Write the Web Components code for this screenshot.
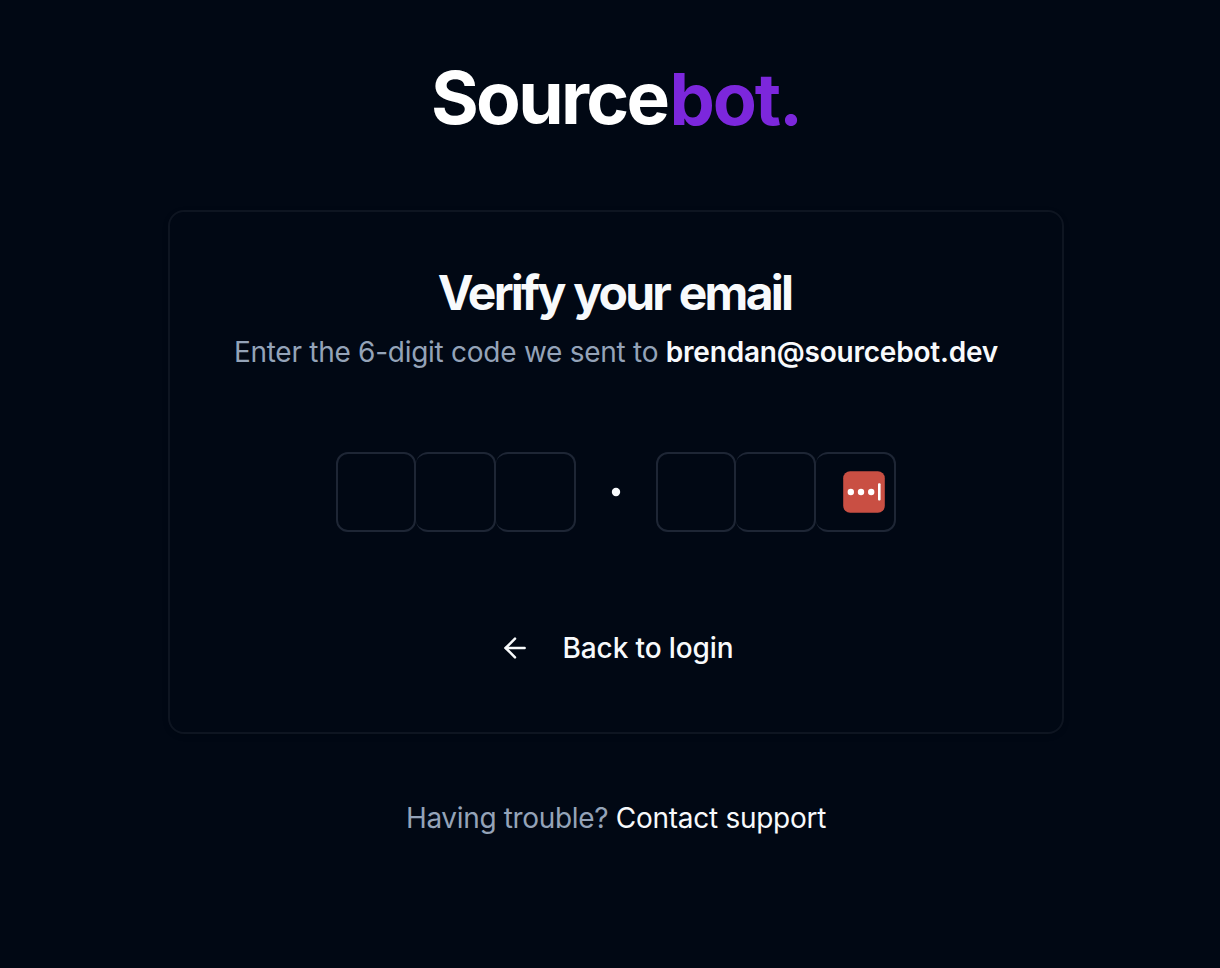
<!DOCTYPE html>
<html lang="en">
<head>
<meta charset="utf-8">
<title>Verify your email</title>
<style>
html,body{margin:0;height:100%;background:#010814;overflow:hidden}
body{font-family:Inter,"Liberation Sans",sans-serif;color:#f8fafc;font-size:28px;line-height:40px;-webkit-font-smoothing:antialiased}
</style>
</head>
<body>
<verify-page>
  <brand-logo slot="logo"></brand-logo>
  <verify-card email="brendan@sourcebot.dev"></verify-card>
  <support-line slot="footer"></support-line>
</verify-page>
<script>
const define = (name, html) => customElements.define(name, class extends HTMLElement {
  constructor() {
    super();
    const t = document.createElement('template');
    t.innerHTML = html;
    this.attachShadow({mode: 'open'}).append(t.content.cloneNode(true));
  }
  connectedCallback() {
    const e = this.shadowRoot.querySelector('[data-email]');
    if (e) e.textContent = this.getAttribute('email');
  }
});

define('brand-logo', `<style>
:host{display:flex;width:370px;height:80px;align-items:baseline;white-space:nowrap;line-height:80px}
.a{font-size:73px;font-weight:700;letter-spacing:-2.7px;color:#fff;width:241px}
.b{font-size:72px;font-weight:750;letter-spacing:-2.1px;color:#7c27dc;position:relative;top:.5px}
</style><span class="a">Source</span><span class="b">bot.</span>`);

define('otp-slot', `<style>
:host{display:flex;align-items:center;justify-content:flex-end;box-sizing:border-box;width:80px;height:80px;border:2px solid #1e2635;border-left-width:0;border-radius:12px;padding-right:9px}
:host([first]){border-left-width:2px}
</style><slot></slot>`);

define('password-badge', `<style>
:host{display:block;width:42px;height:42px}svg{display:block}
</style><svg width="42" height="42" viewBox="0 0 42 42"><rect x=".2" y=".2" width="41.6" height="41.6" rx="7" fill="#c94f43"/><g fill="#fff"><circle cx="7.8" cy="21" r="3.2"/><circle cx="18" cy="21" r="3.2"/><circle cx="28.2" cy="21" r="3.2"/><rect x="35" y="12.3" width="2.6" height="17.2" rx="1"/></g></svg>`);

define('otp-input', `<style>
:host{display:flex;align-items:center;justify-content:center}
.g{display:flex}
.sep{width:80px;display:flex;justify-content:center}
</style>
<div class="g"><otp-slot first></otp-slot><otp-slot></otp-slot><otp-slot></otp-slot></div>
<div class="sep"><svg width="10" height="10" viewBox="0 0 10 10"><circle cx="5" cy="5" r="4.2" fill="#f8fafc"/></svg></div>
<div class="g"><otp-slot first></otp-slot><otp-slot></otp-slot><otp-slot><password-badge></password-badge></otp-slot></div>`);

define('back-button', `<style>
:host{display:flex;align-items:center;justify-content:center;font-weight:500;letter-spacing:-.12px}
svg{margin-right:32px;flex:none}
</style><svg width="32" height="32" viewBox="0 0 24 24" fill="none" stroke="#f8fafc" stroke-width="1.9" stroke-linecap="round" stroke-linejoin="round"><path d="m12 19-7-7 7-7"/><path d="M19.2 12H5"/></svg><span>Back to login</span>`);

define('verify-card', `<style>
:host{display:flex;flex-direction:column;align-items:center;box-sizing:border-box;width:896px;height:524px;border:2px solid #0e1521;border-radius:16px;padding-top:55px;box-shadow:0 2px 6px rgba(0,0,0,.1)}
h1{margin:0;padding-right:3px;font-size:48px;line-height:52px;font-weight:700;letter-spacing:-2.75px;word-spacing:1px;white-space:nowrap}
p{margin:13px 0 0;line-height:40px;color:#94a3b8;white-space:nowrap;letter-spacing:-.27px}
b{font-weight:600;color:#f8fafc;letter-spacing:-.2px}
otp-input{margin-top:80px}
back-button{margin-top:96px}
</style><h1>Verify your email</h1><p>Enter the 6-digit code we sent to <b data-email></b></p><otp-input></otp-input><back-button></back-button>`);

define('support-line', `<style>
:host{display:block;white-space:nowrap;color:#94a3b8;letter-spacing:-.34px}a{color:#f8fafc;letter-spacing:-.27px}
</style>Having trouble? <a>Contact support</a>`);

define('verify-page', `<style>
:host{display:flex;flex-direction:column;align-items:center;box-sizing:border-box;width:1220px;height:968px;padding:58px 0 0 12px}
main{margin:72px 0 64px}
</style><slot name="logo"></slot><main><slot></slot></main><slot name="footer"></slot>`);
</script>
</body>
</html>
